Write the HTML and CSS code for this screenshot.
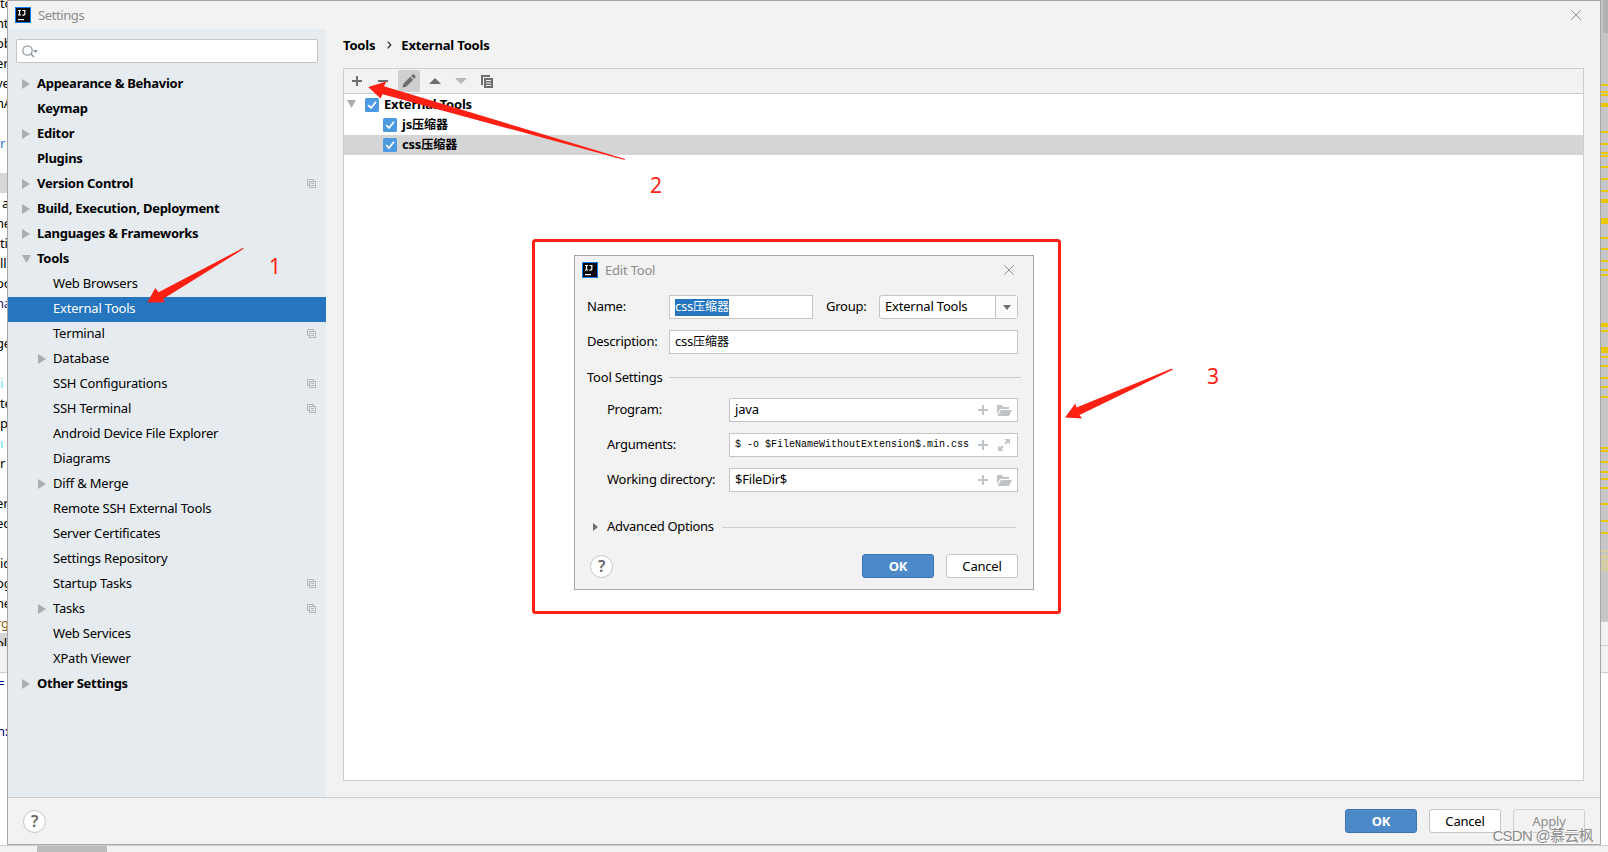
FILE: index.html
```html
<!DOCTYPE html>
<html lang="en">
<head>
<meta charset="utf-8">
<title>Settings</title>
<link rel="stylesheet" href="styles.css">
</head>
<body>
<svg width="0" height="0" class="defs">
  <symbol id="right" viewBox="0 0 8 10"><path d="M0 0L8 5L0 10Z" fill="#adadad"/></symbol>
  <symbol id="down" viewBox="0 0 9 8"><path d="M0 0H9L4.5 8Z" fill="#adadad"/></symbol>
  <symbol id="copy" viewBox="0 0 9 9"><path d="M2 6.500H.5V.5H6.500V2M2.500 2.500H8.500V8.500H2.500ZM4 4.500H7M4 6.500H7" fill="none" stroke="#adb5ba"/></symbol>
  <symbol id="check" viewBox="0 0 14 14"><rect width="14" height="14" rx="1.500" fill="#4b9ae2"/><path d="M3.200 7.200L6 10L11 3.700" fill="none" stroke="#fff" stroke-width="1.800"/></symbol>
  <symbol id="close" viewBox="0 0 10 10"><path d="M.3.3L9.700 9.700M9.700.3L.3 9.700" fill="none" stroke="#909090"/></symbol>
  <symbol id="plus" viewBox="0 0 10 10"><path d="M4 0H6V4H10V6H6V10H4V6H0V4H4Z"/></symbol>
  <symbol id="folder" viewBox="0 0 15 11"><path d="M0 0H5L6.500 2H12V4H3L0 9.500ZM3.800 5H15L12 11H.5Z" fill="#bfc4c8"/></symbol>
  <symbol id="logo" viewBox="0 0 16 16"><rect width="16" height="16" fill="#147cf0"/><rect x="1" y="1" width="14" height="14" fill="#0b0b0d"/><path d="M3 3.500H6M4.500 3V8.500M3 8H6M7.500 3.500H10.500M9.800 3V7Q9.800 8.300 7.300 8" fill="none" stroke="#fff" stroke-width="1.200"/><path d="M3 12H9V13.200H3Z" fill="#fff"/></symbol>
</svg>

<div class="desktop">
  <div class="editor-left">
    <div class="code"><span class="start">to</span><span>nt</span><span>ob</span><span>er</span><span>ve</span><span>nA</span><span></span><span class="blue start">r</span><span></span><span class="caret"></span><span class="start">&#8201;a</span><span>ne</span><span class="start">ti</span><span class="start">ll</span><span>oo</span><span class="navy">na</span><span></span><span>ge</span><span></span><span class="cyan start">i</span><span class="start">te</span><span class="start">p</span><span class="cyan start">ı</span><span class="start">r</span><span></span><span>er</span><span>ec</span><span></span><span class="start">ic</span><span>og</span><span>ne</span><span class="orange">rg</span><span class="caret">ol</span></div>
    <div class="tool-head"></div>
    <div class="console"><span>=</span><span>n:</span></div>
  </div>
  <svg class="editor-right" width="8" height="852">
    <path fill="#c6c6c6" d="M0 0H8V621H0Z"/><path fill="#b2b2b2" d="M3 0H8V33H3Z"/>
    <path fill="#f2f2f2" d="M0 621H8V672H0Z"/><path fill="#d0d0d0" d="M0 621H8V622H0ZM0 645H8V646H0ZM0 672H8V673H0Z"/>
    <path fill="#ebc700" d="M0 84h8v2H0zM0 91h8v2H0zM0 94h8v2H0zM0 103h8v4H0zM0 131h8v2H0zM0 143h8v2H0zM0 152h8v2H0zM0 155h8v2H0zM0 166h8v2H0zM0 178h8v2H0zM0 190h8v2H0zM0 199h8v4H0zM0 218h8v6H0zM0 237h8v2H0zM0 248h8v2H0zM0 260h8v2H0zM0 269h8v2H0zM0 274h8v2H0zM0 323h8v4H0zM0 330h8v2H0zM0 347h8v6H0zM0 356h8v2H0zM0 365h8v2H0zM0 377h8v2H0zM0 386h8v2H0zM0 396h8v2H0zM0 447h8v2H0zM0 450h8v2H0zM0 461h8v2H0zM0 471h8v2H0zM0 478h8v2H0zM0 487h8v2H0zM0 503h8v2H0zM0 520h8v2H0zM0 532h8v2H0z"/>
    <path fill="#d8cda0" d="M0 550h8v2H0zM0 555h8v4H0zM0 560h8v6H0zM0 567h8v4H0z"/>
  </svg>
  <div class="statusbar"><div class="thumb"></div></div>
</div>

<main class="window">
  <header class="titlebar"><svg width="16" height="16"><use href="#logo"/></svg><span class="title">Settings</span><svg class="x" width="10" height="10"><use href="#close"/></svg></header>
  <div class="body">
    <nav class="sidebar">
      <div class="search"><svg width="18" height="14" viewBox="0 0 18 14"><circle cx="5.500" cy="5.500" r="4.700" fill="none" stroke="#8e9aa2" stroke-width="1.200"/><path d="M9 9L12 12" stroke="#8e9aa2" stroke-width="1.500"/><path d="M11 5H16L13.500 8Z" fill="#8e9aa2"/></svg></div>
      <ul class="tree">
        <li class="top"><svg><use href="#right"/></svg><b>Appearance &amp; Behavior</b></li>
        <li class="top"><i></i><b>Keymap</b></li>
        <li class="top"><svg><use href="#right"/></svg><b>Editor</b></li>
        <li class="top"><i></i><b>Plugins</b></li>
        <li class="top"><svg><use href="#right"/></svg><b>Version Control</b><svg class="cp"><use href="#copy"/></svg></li>
        <li class="top"><svg><use href="#right"/></svg><b>Build, Execution, Deployment</b></li>
        <li class="top"><svg><use href="#right"/></svg><b>Languages &amp; Frameworks</b></li>
        <li class="top"><svg class="dn"><use href="#down"/></svg><b>Tools</b></li>
        <li><i></i><span>Web Browsers</span></li>
        <li class="selected"><i></i><span>External Tools</span></li>
        <li><i></i><span>Terminal</span><svg class="cp"><use href="#copy"/></svg></li>
        <li><svg><use href="#right"/></svg><span>Database</span></li>
        <li><i></i><span>SSH Configurations</span><svg class="cp"><use href="#copy"/></svg></li>
        <li><i></i><span>SSH Terminal</span><svg class="cp"><use href="#copy"/></svg></li>
        <li><i></i><span>Android Device File Explorer</span></li>
        <li><i></i><span>Diagrams</span></li>
        <li><svg><use href="#right"/></svg><span>Diff &amp; Merge</span></li>
        <li><i></i><span>Remote SSH External Tools</span></li>
        <li><i></i><span>Server Certificates</span></li>
        <li><i></i><span>Settings Repository</span></li>
        <li><i></i><span>Startup Tasks</span><svg class="cp"><use href="#copy"/></svg></li>
        <li><svg><use href="#right"/></svg><span>Tasks</span><svg class="cp"><use href="#copy"/></svg></li>
        <li><i></i><span>Web Services</span></li>
        <li><i></i><span>XPath Viewer</span></li>
        <li class="top"><svg><use href="#right"/></svg><b>Other Settings</b></li>
      </ul>
    </nav>
    <section class="content">
      <div class="crumbs"><b>Tools</b><svg width="5" height="8" viewBox="0 0 5 8"><path d="M.7.7L3.800 4L.7 7.300" fill="none" stroke="#222" stroke-width="1.200"/></svg><b>External Tools</b></div>
      <div class="panel">
        <div class="toolbar">
          <span><svg width="10" height="10" fill="#6e6e6e"><use href="#plus"/></svg></span>
          <span><svg width="10" height="10"><path d="M0 4H10V6H0Z" fill="#6e6e6e"/></svg></span>
          <span class="active"><svg width="14" height="14" viewBox="0 0 14 14" fill="#6e6e6e"><path d="M.5 13.500L1.300 9.800L8.300 2.800L11.200 5.700L4.200 12.700ZM9.200 1.900L10.600.5Q11.300 0 12 .6L13.400 2Q14 2.700 13.500 3.400L12.100 4.800Z"/></svg></span>
          <span><svg width="12" height="6"><path d="M0 6L6 0L12 6Z" fill="#6e6e6e"/></svg></span>
          <span><svg width="12" height="6"><path d="M0 0H12L6 6Z" fill="#b8b8b8"/></svg></span>
          <span><svg width="12" height="13" viewBox="0 0 12 13"><path d="M0 0H9V2H2V10H0ZM3 3H12V13H3Z" fill="#6e6e6e"/><path d="M5 5.500H10M5 8H10M5 10.500H10" stroke="#f2f2f2"/></svg></span>
        </div>
        <div class="tool-row root"><svg class="dn"><use href="#down"/></svg><svg class="ck"><use href="#check"/></svg><b>External Tools</b></div>
        <div class="tool-row"><svg class="ck"><use href="#check"/></svg><b>js<em>压缩器</em></b></div>
        <div class="tool-row picked"><svg class="ck"><use href="#check"/></svg><b>css<em>压缩器</em></b></div>
      </div>
    </section>
  </div>
  <footer class="footer"><span class="help">?</span><div class="buttons"><button class="ok">OK</button><button>Cancel</button><button class="off">Apply</button></div></footer>
</main>

<section class="dialog">
  <header class="titlebar"><svg width="16" height="16"><use href="#logo"/></svg><span class="title">Edit Tool</span><svg class="x" width="10" height="10"><use href="#close"/></svg></header>
  <div class="form">
    <div class="line"><label>Name:</label><div class="input name"><mark>css<em>压缩器</em></mark></div><label class="group">Group:</label><div class="combo"><span>External Tools</span><div class="drop"><svg width="8" height="5"><path d="M0 0H8L4 5Z" fill="#6e6e6e"/></svg></div></div></div>
    <div class="line"><label>Description:</label><div class="input"><span>css<em>压缩器</em></span></div></div>
    <div class="heading"><span>Tool Settings</span><hr></div>
    <div class="line sub"><label>Program:</label><div class="input"><span>java</span><svg class="add"><use href="#plus"/></svg><svg class="fold"><use href="#folder"/></svg></div></div>
    <div class="line sub"><label>Arguments:</label><div class="input"><span class="mono">$ -o $FileNameWithoutExtension$.min.css</span><svg class="add"><use href="#plus"/></svg><svg class="expand" viewBox="0 0 12 12"><path d="M6.500 0H12V5.500L10 3.500L8 5.500L6.500 4L8.500 2ZM0 6.500L2 8.500L4 6.500L5.500 8L3.500 10L5.500 12H0Z" fill="#bfc4c8"/></svg></div></div>
    <div class="line sub"><label>Working directory:</label><div class="input"><span>$FileDir$</span><svg class="add"><use href="#plus"/></svg><svg class="fold"><use href="#folder"/></svg></div></div>
    <div class="heading advanced"><svg width="5" height="8"><path d="M0 0L5 4L0 8Z" fill="#6e6e6e"/></svg><span>Advanced Options</span><hr></div>
  </div>
  <footer class="footer"><span class="help">?</span><div class="buttons"><button class="ok">OK</button><button>Cancel</button></div></footer>
</section>

<svg class="marks" width="1608" height="852">
  <rect x="533.500" y="240.500" width="526" height="372" rx="2" fill="none" stroke="#ff2014" stroke-width="3"/>
  <g fill="#ff2014">
    <path d="M147.300 302.600L155.300 288L158.500 292.300L243 248L243.800 248.800L163 299L165 302.200Z"/>
    <path d="M368.300 87L386.300 81.500L384 86.300L625 159L624.600 160L382.500 94.300L380.500 98.500Z"/>
    <path d="M1065 417.600L1075.300 403.500L1076.500 407.500L1172 368.600L1172.700 369.800L1079.500 415L1082 418.500Z"/>
  </g>
  <g class="num"><text x="269" y="274">1</text><text x="650" y="193">2</text><text x="1207" y="384">3</text></g>
</svg>
<div class="watermark">CSDN @慕云枫</div>
</body>
</html>
```
FILE: styles.css
```css
* { box-sizing: border-box; }
body { margin: 0; width: 1608px; height: 852px; overflow: hidden; position: relative; background: #fff; color: #000; font: 13px/20px "Noto Sans", "Noto Sans CJK SC", sans-serif; letter-spacing: -0.2px; }
svg { display: block; flex: none; }
.defs { position: absolute; }
em { font-style: normal; font-size: 12px; letter-spacing: 0; }
b { font-weight: 700; letter-spacing: -0.27px; }

/* editor behind the settings window */
.desktop { position: absolute; inset: 0; }
.editor-left { width: 7px; height: 845px; overflow: hidden; }
.code { display: flex; flex-direction: column; height: 646px; overflow: hidden; }
.code span { flex: none; height: 20px; width: 9px; white-space: nowrap; text-indent: -4px; }
.code .start { text-indent: 0; }
.code span:first-child { height: 13px; line-height: 6px; }
.code .caret { background: #d6d6d6; }
.code .blue { color: #287bde; }
.code .navy { color: #1d1a80; }
.code .cyan { color: #5ce0ff; }
.code .orange { color: #8a5a20; }
.tool-head { height: 27px; background: #f2f2f2; border-bottom: 1px solid #d0d0d0; }
.console { display: flex; flex-direction: column; gap: 28px; color: #000080; }
.console span { width: 9px; white-space: nowrap; text-indent: -3px; }
.editor-right { position: absolute; right: 0; top: 0; }
.statusbar { position: absolute; left: 0; right: 0; bottom: 0; height: 7px; background: #f2f2f2; border-top: 1px solid #d0d0d0; padding-left: 37px; }
.thumb { width: 70px; height: 6px; background: #bcbcbc; }

.window { position: absolute; left: 7px; top: 0; width: 1594px; height: 845px; background: #f2f2f2; border: 1px solid #a6a6a6; display: flex; flex-direction: column; }
.titlebar { display: flex; align-items: center; height: 28px; padding: 0 19px 0 7px; color: #8c8c8c; }
.title { margin-left: 7px; }
.window .title { letter-spacing: -0.4px; }
.titlebar .x { margin-left: auto; }
.body { flex: 1; display: flex; min-height: 0; }
.sidebar { width: 318px; background: #e6ebef; padding-top: 10px; }
.search { margin: 0 8px; height: 24px; width: 302px; background: #fff; border: 1px solid #c4c4c4; border-radius: 2px; padding: 5px 0 0 5px; }
.tree { list-style: none; margin: 9px 0 0; padding: 0; }
.tree li { height: 25px; display: flex; align-items: center; padding: 0 10px 2px 30px; }
.tree li.top { padding-left: 14px; }
.tree b, .tree span { padding-bottom: 1px; }
.tree i, .tree li > svg { width: 8px; height: 10px; margin-right: 7px; }
.tree li > .dn { width: 9px; height: 8px; margin-right: 6px; }
.tree li > .cp { width: 9px; height: 9px; margin: 0 0 0 auto; }
.tree .selected { background: #2675bf; color: #fff; }
.content { flex: 1; padding: 6px 16px 16px 17px; display: flex; flex-direction: column; }
.crumbs { height: 20px; display: flex; align-items: center; }
.crumbs b { letter-spacing: -0.18px; }
.crumbs svg { margin: 0 9px 0 12px; }
.panel { flex: 1; margin-top: 13px; border: 1px solid #cdcdcd; background: #fff; }
.toolbar { height: 25px; background: #f2f2f2; border-bottom: 1px solid #cdcdcd; display: flex; align-items: center; gap: 4px; padding-left: 2px; margin-bottom: 1px; }
.toolbar span { width: 22px; height: 22px; display: flex; align-items: center; justify-content: center; border-radius: 2px; }
.toolbar .active { background: #cfcfcf; }
.tool-row { height: 20px; display: flex; align-items: center; padding-left: 39px; }
.tool-row b { padding-bottom: 1px; letter-spacing: -0.2px; }
.tool-row.root { padding-left: 3px; }
.tool-row.root b { padding-bottom: 2px; }
.tool-row .dn { width: 9px; height: 8px; margin: 0 9px 2px 0; }
.tool-row .ck { width: 14px; height: 14px; margin-right: 5px; }
.picked { background: #d5d5d5; }
.window > .footer { height: 47px; border-top: 1px solid #cdcdcd; padding: 11px 15px 0 15px; }
.footer { display: flex; justify-content: space-between; }
.help { width: 23px; height: 23px; margin-top: 1px; border: 1px solid #c4c4c4; border-radius: 50%; background: #fff; color: #666; font-weight: 600; font-size: 16px; line-height: 21px; text-align: center; }
.buttons { display: flex; gap: 12px; }
button { width: 72px; height: 24px; padding: 0; font: inherit; letter-spacing: inherit; color: #000; background: #fff; border: 1px solid #c4c4c4; border-radius: 3px; }
.ok { background: #4d89c9; border-color: #3d75b2; color: #fff; font-weight: 700; }
.off { background: #f2f2f2; border-color: #cfcfcf; color: #8c8c8c; }

.dialog { position: absolute; left: 574px; top: 255px; width: 460px; height: 335px; background: #f2f2f2; border: 1px solid #a6a6a6; }
.dialog .titlebar { height: 28px; }
.form { padding: 11px 15px 0 12px; }
.line { display: flex; align-items: center; height: 24px; margin-bottom: 11px; }
.line label { width: 82px; flex: none; white-space: nowrap; padding-bottom: 2px; letter-spacing: -0.25px; }
.line.sub { padding-left: 20px; }
.line.sub label { width: 122px; }
.line .group { width: 53px; margin-left: 13px; }
.input { flex: 1; height: 24px; background: #fff; border: 1px solid #c4c4c4; display: flex; align-items: center; padding: 0 5px; white-space: nowrap; }
.input span, .combo span { padding-bottom: 2px; }
.input.name { flex: none; width: 144px; }
mark { background: #2675bf; color: #fff; height: 17px; line-height: 15px; }
.combo { flex: 1; height: 24px; background: #fff; border: 1px solid #c4c4c4; border-radius: 3px; display: flex; align-items: center; padding-left: 5px; }
.drop { margin-left: auto; width: 22px; height: 22px; border-left: 1px solid #c4c4c4; background: #fafafa; display: flex; align-items: center; justify-content: center; }
.add { width: 10px; height: 10px; margin-left: auto; fill: #bfc4c8; }
.fold { width: 15px; height: 11px; margin-left: 9px; }
.expand { width: 12px; height: 12px; margin: 0 2px 0 10px; }
.input .mono { font: 10px/20px "Liberation Mono", monospace; letter-spacing: 0; padding: 0; }
.heading { display: flex; align-items: center; height: 24px; margin: 0 -3px 9px 0; white-space: nowrap; }
.heading hr { flex: 1; margin: 0 0 0 6px; border: 0; border-top: 1px solid #cdcdcd; }
.advanced { margin: 23px 2px 0 6px; }
.advanced span { margin-left: 9px; padding-bottom: 2px; letter-spacing: -0.3px; }
.advanced hr { margin-left: 8px; }
.dialog .footer { padding: 15px 15px 0; }

.marks { position: absolute; left: 0; top: 0; }
.num { fill: #ff2014; font-size: 21px; letter-spacing: 0; }
.watermark { position: absolute; right: 15px; bottom: 5px; font: 15px/22px "Liberation Sans", "Noto Sans CJK SC", sans-serif; letter-spacing: -0.7px; color: #8b8b8b; white-space: nowrap; text-shadow: 1px 1px 0 #fff; }
```
